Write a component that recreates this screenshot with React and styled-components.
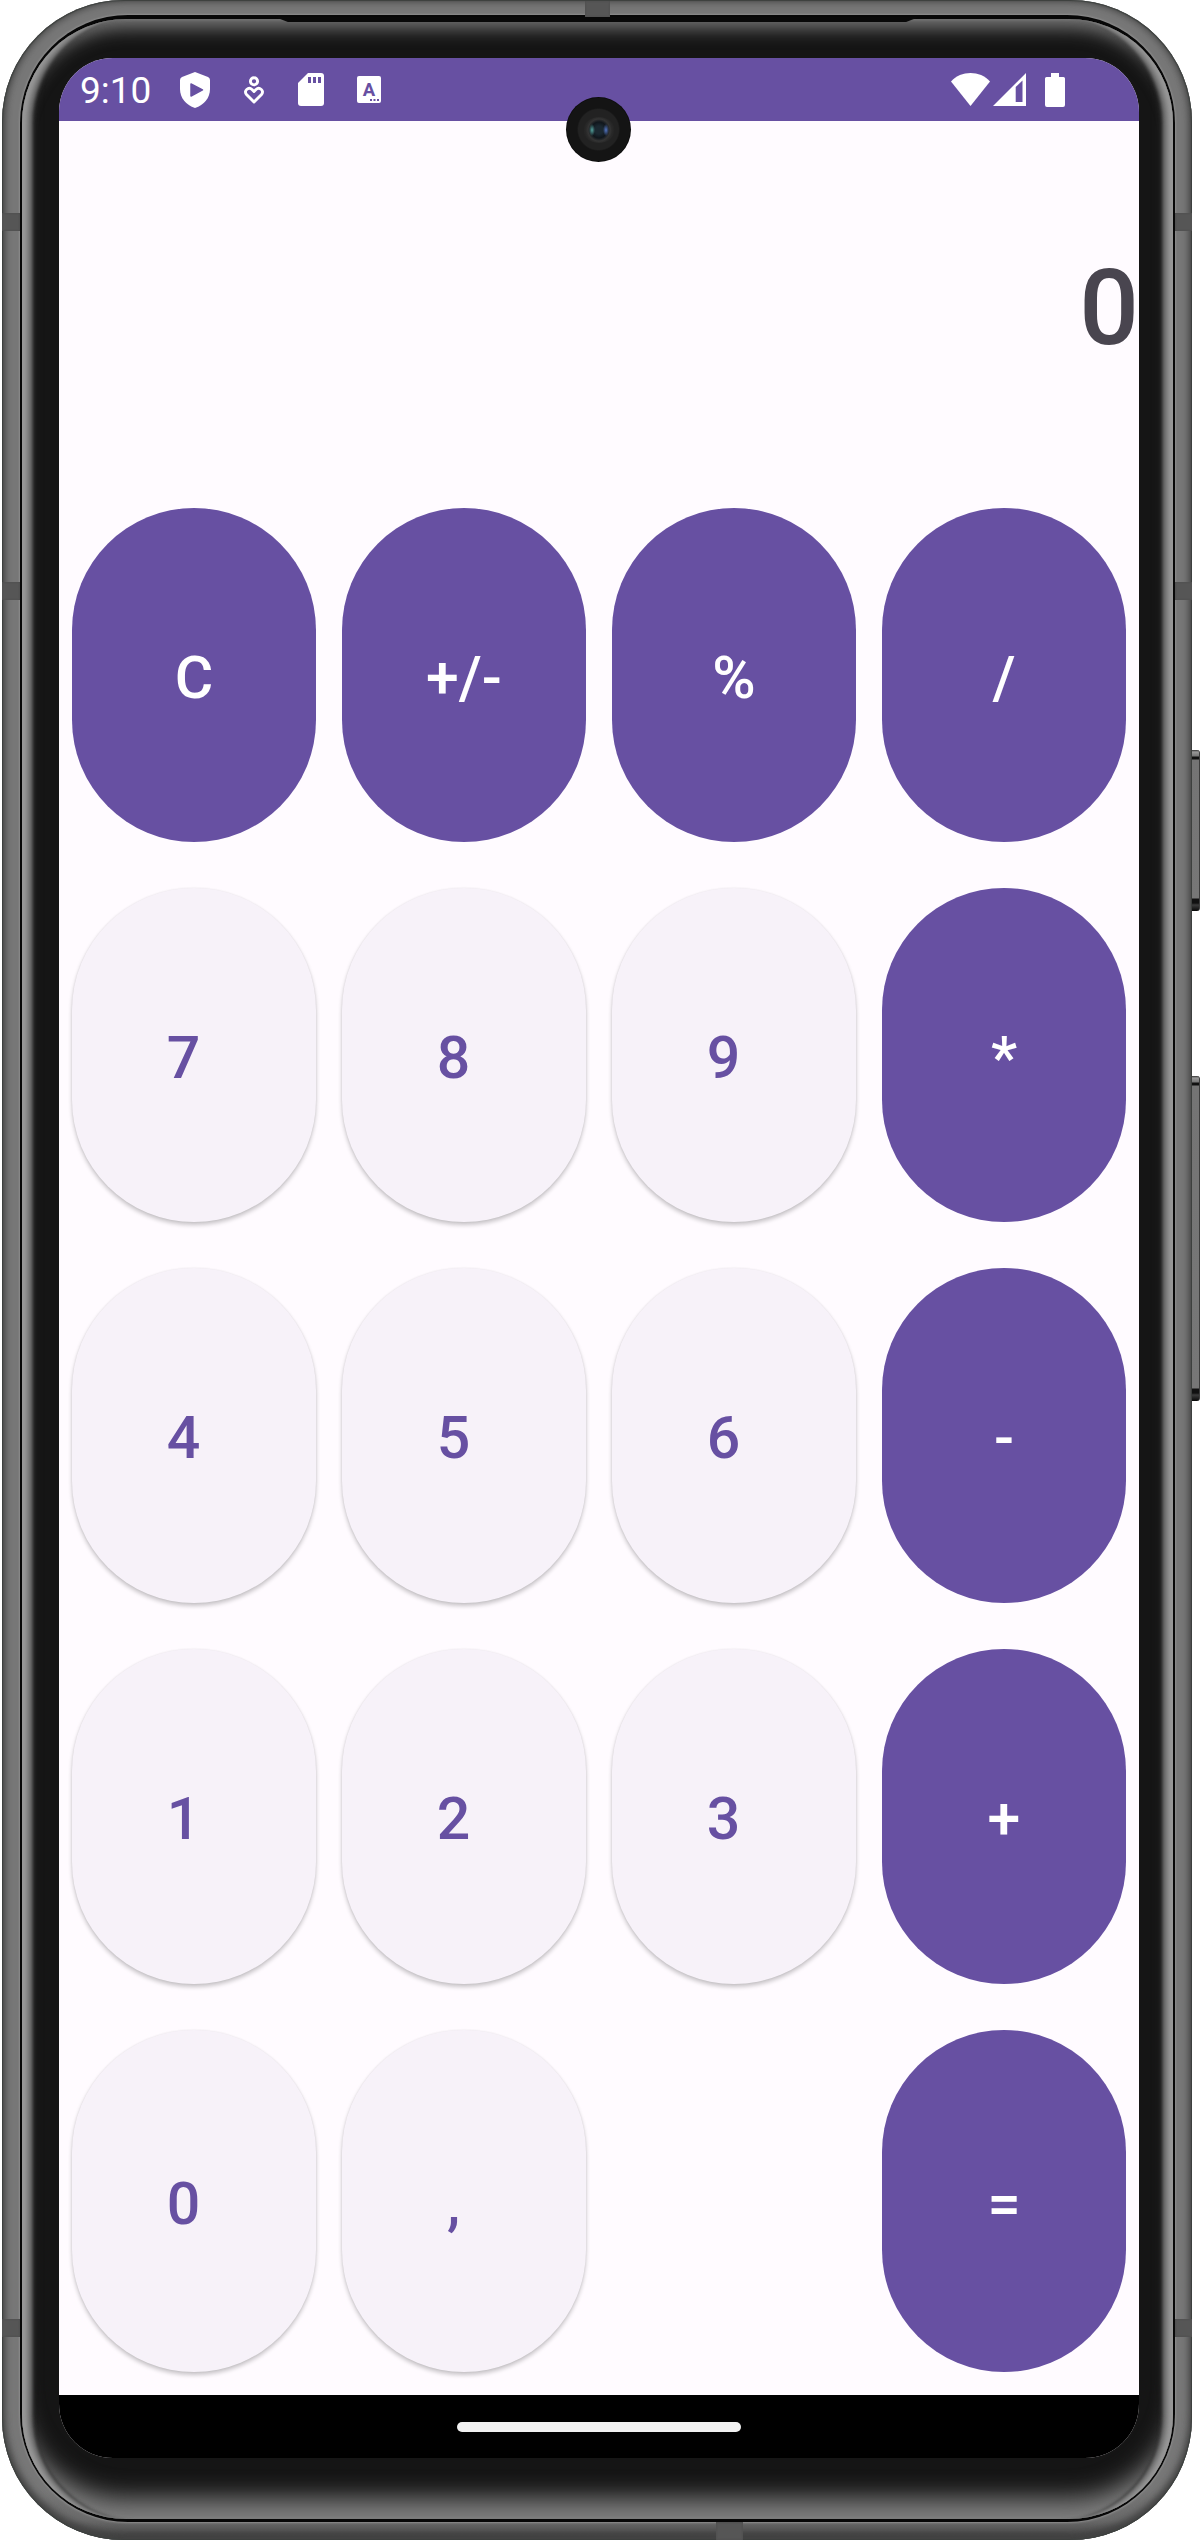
import React, { useState } from "react";
import styled, { createGlobalStyle, css } from "styled-components";

const purple = "#6750A2";
const surface = "#FFFBFF";

const GlobalStyle = createGlobalStyle`
  *, *::before, *::after { box-sizing: border-box; }
  body { margin: 0; background: #fff; font-family: Roboto, "Liberation Sans", sans-serif; }
`;

const Stage = styled.div`
  width: 1200px;
  height: 2541px;
  padding: 0 8px 1px 2px;
  background: #fff;
  overflow: hidden;
`;

const Phone = styled.div`
  position: relative;
  width: 1190px;
  height: 2540px;
  padding: 15px 17px 18px 18px;
  border-radius: 122px;
  background: linear-gradient(to bottom, #777 0, #777 2490px, #6a6a6a 2520px, #444 2540px);
  box-shadow:
    inset 0 0 1px 1px #3c403e,
    inset 0 0 7px 2px #4a4a4a,
    inset 0 -5px 8px #383838;
`;

const Rim = styled.div`
  width: 1155px;
  height: 2507px;
  padding: 4px 2px 3px;
  border-radius: 108px;
  background: #070707;
  box-shadow: 0 0 2px 1px #8d8d8d;
`;

const Bezel = styled.div`
  width: 1151px;
  height: 2500px;
  padding: 39px 34px 61px 37px;
  border-radius: 104px;
  background: #151515;
  box-shadow:
    inset 8px 0 5px -2px #989898,
    inset -8px 0 5px -2px #989898,
    inset 12px 0 3px -2px #666,
    inset -12px 0 3px -2px #666,
    inset 14px 0 3px -2px #333,
    inset -14px 0 3px -2px #333,
    inset 0 14px 18px -5px #777,
    inset 0 -27px 24px -6px #7e7e7e;
`;

const Screen = styled.div`
  display: flex;
  flex-direction: column;
  width: 1080px;
  height: 2400px;
  border-radius: 54px;
  background: ${surface};
  overflow: hidden;
`;

const SpeakerSlot = styled.div`
  position: absolute;
  top: 17px;
  left: 273px;
  width: 644px;
  height: 5px;
  background: #090909;
  clip-path: polygon(0 0, 100% 0, 98% 100%, 2% 100%);
`;

const band = {
  left: css`left: 0; width: 18px; height: 18px;`,
  right: css`right: 0; width: 17px; height: 18px;`,
  top: css`top: 1px; left: 583px; width: 25px; height: 16px;`,
  bottom: css`bottom: 0; left: 714px; width: 27px; height: 18px;`,
};

const AntennaBand = styled.div`
  position: absolute;
  ${({ $side }) => band[$side]}
  ${({ $y }) => $y && css`top: ${$y}px;`}
  background: #565656;
  box-shadow: inset 0 0 2px #484848;
`;

const SideButton = styled.div`
  position: absolute;
  left: 1190px;
  top: ${({ $y }) => $y}px;
  width: 8px;
  height: ${({ $height }) => $height}px;
  border-radius: 0 3px 3px 0;
  border-right: 1px solid #3c3c3c;
  background: linear-gradient(to bottom,
    #333 0, #999 2px, #777 6px, #111 7px, #111 9px, #747474 10px,
    #777 calc(100% - 13px), #111 calc(100% - 12px), #111 calc(100% - 8px),
    #3b3b3b calc(100% - 6px), #080808 100%);
`;

const Camera = styled.div`
  position: absolute;
  top: 97px;
  left: 564px;
  display: grid;
  place-items: center;
  width: 65px;
  height: 65px;
  border-radius: 50%;
  background: radial-gradient(circle, #222 0 20px, #141414 21.5px 31px, #080808 32.5px);
`;

const Lens = styled.div`
  width: 32px;
  height: 26px;
  border-radius: 50%;
  background:
    radial-gradient(ellipse 3px 6px at 9px 13px, #55a39e, transparent),
    radial-gradient(ellipse 3px 6px at 23px 13px, #5577c4, transparent),
    radial-gradient(circle at center, #1b2831 0 4px, #10161c 8px, #343434 11px, #292929 13px, #222 16px);
`;

const StatusBar = styled.header`
  display: flex;
  align-items: center;
  flex: none;
  height: 63px;
  padding: 0 74px 0 21px;
  background: ${purple};
  color: #fff;
`;

const Clock = styled.time`
  width: 100px;
  padding-top: 2px;
  font-size: 37px;
  line-height: 44px;
`;

const Notifications = styled.div`
  display: flex;
  align-items: center;
  gap: 33px;
`;

const SystemIcons = styled.div`
  display: flex;
  align-items: center;
  margin-left: auto;
`;

const Icon = styled.svg`
  display: block;
  flex: none;
  width: ${({ $w }) => $w}px;
  height: ${({ $h }) => $h}px;
  margin-left: ${({ $gap = 0 }) => $gap}px;
`;

const Calculator = styled.main`
  display: flex;
  flex-direction: column;
  flex: none;
  height: 2274px;
`;

const Display = styled.output`
  display: flex;
  justify-content: flex-end;
  height: 387px;
  padding-top: 126px;
  color: #49454f;
  font-size: 105px;
  font-weight: 500;
  line-height: 123px;
`;

const Keypad = styled.div`
  display: grid;
  grid-template-columns: repeat(4, 244px);
  grid-template-rows: 334px 334px 335px 335px 342px;
  gap: 46px 26px;
  padding: 0 13px;
`;

const Key = styled.button`
  display: flex;
  align-items: center;
  justify-content: center;
  border: 0;
  border-radius: 122px;
  padding: 5px 0 0;
  background: ${purple};
  color: #fff;
  font: 500 59px/70px Roboto, "Liberation Sans", sans-serif;
  ${({ $tonal }) => $tonal && css`
    padding-right: 21px;
    background: #f7f2f9;
    color: ${purple};
    box-shadow: 0 3px 4px rgba(0, 0, 0, 0.22), 0 0 2px rgba(0, 0, 0, 0.08);
  `}
  ${({ $column }) => $column && css`grid-column: ${$column};`}
`;

const NavigationBar = styled.footer`
  display: grid;
  place-items: center;
  flex: 1;
  background: #000;
`;

const HomeHandle = styled.div`
  width: 284px;
  height: 10px;
  border-radius: 5px;
  background: #f1f1f1;
`;

const keys = [
  "C", "+/-", "%", "/",
  "7", "8", "9", "*",
  "4", "5", "6", "-",
  "1", "2", "3", "+",
  "0", ",", "=",
];

const isTonal = (label) => /^[\d,]$/.test(label);

function ShieldIcon() {
  return (
    <Icon $w={30} $h={36} viewBox="0 0 30 36">
      <path fill="#fff" d="M15 0 28 5Q30 6 30 8V17C30 26 24 33 15 36C6 33 0 26 0 17V8Q0 6 2 5Z" />
      <path fill={purple} stroke={purple} strokeWidth="1.5" strokeLinejoin="round" d="M11 12 22.5 17.8 11 24Z" />
    </Icon>
  );
}

function WellbeingIcon() {
  return (
    <Icon $w={22} $h={28} viewBox="0 0 21 28" fill="none" stroke="#fff" strokeWidth="2.9">
      <circle cx="10.5" cy="5.3" r="3.6" />
      <path strokeLinejoin="round" d="M10.5 26 3 18.5C-.3 14.8 5 10.5 8.5 13.5L10.5 15.5 12.5 13.5C16 10.5 21.3 14.8 18 18.5Z" />
    </Icon>
  );
}

function SdCardIcon() {
  return (
    <Icon $w={26} $h={33} viewBox="0 0 26 33">
      <path fill="#fff" d="M10 0H23Q26 0 26 3V30Q26 33 23 33H3Q0 33 0 30V10Z" />
      <path fill={purple} d="M10 4h3v6h-3zM15 4h3v6h-3zM20 4h3v6h-3z" />
    </Icon>
  );
}

function KeyboardIcon() {
  return (
    <Icon $w={24} $h={27} viewBox="0 0 24 27">
      <rect width="24" height="27" rx="2" fill="#fff" />
      <text x="12" y="19.5" textAnchor="middle" fontFamily="Roboto" fontWeight="700" fontSize="18.5" fill={purple}>A</text>
      <path fill={purple} d="M13 23h2v2h-2zM16.5 23h2v2h-2zM20 23h2v2h-2z" />
    </Icon>
  );
}

function WifiIcon() {
  return (
    <Icon $w={39} $h={33} viewBox="0 0 39 33">
      <path fill="#fff" d="M0 8.5C10-2.8 29-2.8 39 8.5L19.5 33Z" />
    </Icon>
  );
}

function SignalIcon() {
  return (
    <Icon $w={33} $h={33} $gap={3} viewBox="0 0 33 33">
      <path fill="#fff" fillRule="evenodd" d="M0 33 33 0V33ZM22.7 14V29H29.5V7.5Z" />
    </Icon>
  );
}

function BatteryIcon() {
  return (
    <Icon $w={20} $h={34} $gap={19} viewBox="0 0 20 34">
      <path fill="#fff" d="M6 0H14V4H18.5Q20 4 20 5.5V32Q20 34 18 34H2Q0 34 0 32V5.5Q0 4 1.5 4H6Z" />
    </Icon>
  );
}

export default function App() {
  const [value] = useState("0");

  return (
    <>
      <GlobalStyle />
      <Stage>
        <Phone>
          <Rim>
            <Bezel>
              <Screen>
                <StatusBar>
                  <Clock>9:10</Clock>
                  <Notifications>
                    <ShieldIcon />
                    <WellbeingIcon />
                    <SdCardIcon />
                    <KeyboardIcon />
                  </Notifications>
                  <SystemIcons>
                    <WifiIcon />
                    <SignalIcon />
                    <BatteryIcon />
                  </SystemIcons>
                </StatusBar>
                <Calculator>
                  <Display>{value}</Display>
                  <Keypad>
                    {keys.map((label) => (
                      <Key key={label} $tonal={isTonal(label)} $column={label === "=" ? 4 : undefined}>
                        {label}
                      </Key>
                    ))}
                  </Keypad>
                </Calculator>
                <NavigationBar>
                  <HomeHandle />
                </NavigationBar>
              </Screen>
            </Bezel>
          </Rim>
          <SpeakerSlot />
          <AntennaBand $side="top" />
          <AntennaBand $side="bottom" />
          {[213, 582, 2319].map((y) => (
            <React.Fragment key={y}>
              <AntennaBand $side="left" $y={y} />
              <AntennaBand $side="right" $y={y} />
            </React.Fragment>
          ))}
          <SideButton $y={750} $height={161} />
          <SideButton $y={1076} $height={325} />
          <Camera>
            <Lens />
          </Camera>
        </Phone>
      </Stage>
    </>
  );
}
